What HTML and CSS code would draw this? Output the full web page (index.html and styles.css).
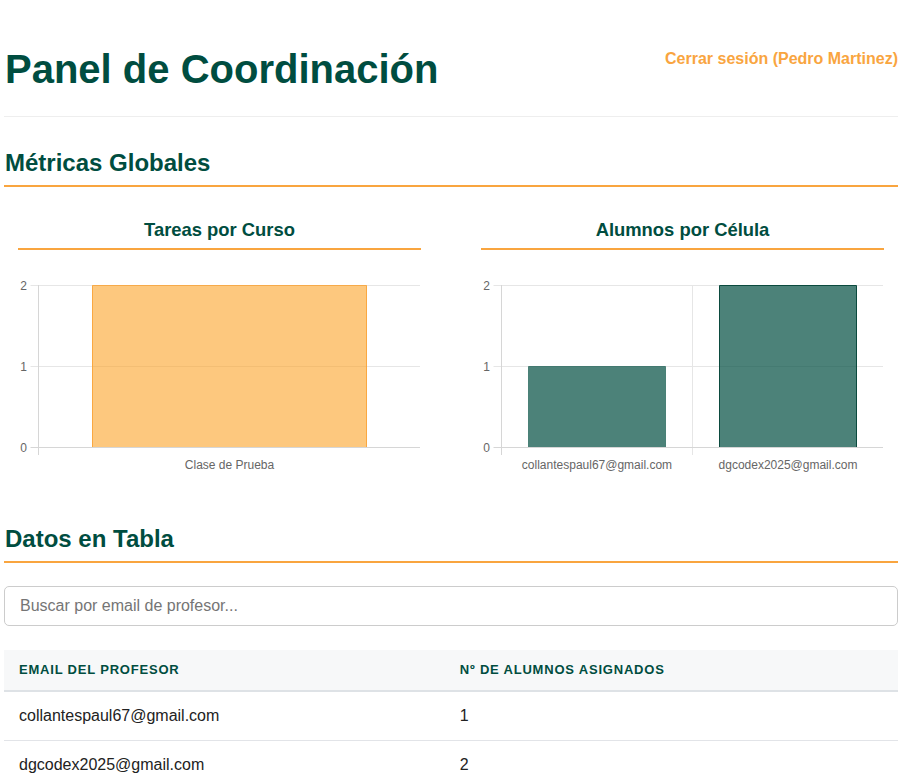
FILE: index.html
```html
<!DOCTYPE html>
<html lang="es">
<head>
<meta charset="utf-8">
<title>Panel de Coordinación</title>
<link rel="stylesheet" href="styles.css">
</head>
<body>
<div class="page">
  <header class="top">
    <h1 class="title">Panel de Coordinación</h1>
    <a class="logout" href="#">Cerrar sesión (Pedro Martinez)</a>
  </header>

  <section class="metrics">
    <h2 class="section-title">Métricas Globales</h2>
    <div class="charts">
      <div class="chart-card">
        <h3 class="chart-title">Tareas por Curso</h3>
        <svg class="chart" width="403" height="205" viewBox="0 0 403 205">
          <g class="grid">
            <line x1="12.5" y1="14.5" x2="402" y2="14.5"/>
            <line x1="12.5" y1="95.5" x2="402" y2="95.5"/>
          </g>
          <rect x="74" y="14.5" width="275" height="162" class="bar-orange"/>
          <path d="M74.5 176.5 V14.5 H348.5 V176.5" class="bar-orange-edge"/>
          <g class="axis">
            <line x1="20.5" y1="14" x2="20.5" y2="184"/>
            <line x1="12.5" y1="176.5" x2="402" y2="176.5"/>
          </g>
          <g class="tick-label">
            <text x="9" y="18.5" text-anchor="end">2</text>
            <text x="9" y="99.5" text-anchor="end">1</text>
            <text x="9" y="180.5" text-anchor="end">0</text>
            <text x="211.5" y="198" text-anchor="middle">Clase de Prueba</text>
          </g>
        </svg>
      </div>
      <div class="chart-card">
        <h3 class="chart-title">Alumnos por Célula</h3>
        <svg class="chart" width="403" height="205" viewBox="0 0 403 205">
          <g class="grid">
            <line x1="12.5" y1="14.5" x2="402" y2="14.5"/>
            <line x1="12.5" y1="95.5" x2="402" y2="95.5"/>
            <line x1="211.5" y1="14" x2="211.5" y2="184"/>
          </g>
          <rect x="47.5" y="95.5" width="137" height="81" class="bar-green"/>
          <path d="M47.5 176.5 V95.5 H184.5 V176.5" class="bar-green-edge soft"/>
          <rect x="238.5" y="14.5" width="137" height="162" class="bar-green"/>
          <path d="M238.5 176.5 V14.5 H375.5 V176.5" class="bar-green-edge"/>
          <g class="axis">
            <line x1="20.5" y1="14" x2="20.5" y2="184"/>
            <line x1="12.5" y1="176.5" x2="402" y2="176.5"/>
          </g>
          <g class="tick-label">
            <text x="9" y="18.5" text-anchor="end">2</text>
            <text x="9" y="99.5" text-anchor="end">1</text>
            <text x="9" y="180.5" text-anchor="end">0</text>
            <text x="116" y="198" text-anchor="middle">collantespaul67@gmail.com</text>
            <text x="307" y="198" text-anchor="middle">dgcodex2025@gmail.com</text>
          </g>
        </svg>
      </div>
    </div>
  </section>

  <section class="table-section">
    <h2 class="section-title">Datos en Tabla</h2>
    <input class="search" type="text" placeholder="Buscar por email de profesor...">
    <table class="data">
      <thead>
        <tr><th class="col-email">Email del Profesor</th><th>Nº de Alumnos Asignados</th></tr>
      </thead>
      <tbody>
        <tr><td>collantespaul67@gmail.com</td><td>1</td></tr>
        <tr><td>dgcodex2025@gmail.com</td><td>2</td></tr>
      </tbody>
    </table>
  </section>
</div>
</body>
</html>
```
FILE: styles.css
```css
* { box-sizing: border-box; }

body {
  margin: 0;
  font-family: "Liberation Sans", Arial, Helvetica, sans-serif;
  color: #222;
  background: #fff;
}

.page {
  padding: 46px 10px 0 4px;
}

.top {
  display: flex;
  justify-content: space-between;
  align-items: flex-start;
  padding-bottom: 24px;
  border-bottom: 1px solid #eeeeee;
}

.title {
  margin: 0 0 0 1px;
  font-size: 40px;
  line-height: 46px;
  font-weight: 700;
  color: #004d40;
}

.logout {
  margin-top: 4px;
  font-size: 16px;
  font-weight: 700;
  color: #f9a53f;
  text-decoration: none;
}

.metrics {
  margin-top: 32px;
}

.section-title {
  margin: 0;
  padding-bottom: 8px;
  padding-left: 1px;
  font-size: 24px;
  line-height: 28px;
  font-weight: 700;
  color: #004d40;
  border-bottom: 2px solid #f9a53f;
}

.charts {
  display: grid;
  grid-template-columns: 1fr 1fr;
  column-gap: 32px;
  margin-top: 18px;
}

.chart-card {
  padding: 14px;
}

.chart-title {
  margin: 0 0 21px;
  padding-bottom: 8px;
  text-align: center;
  font-size: 18.4px;
  line-height: 21px;
  font-weight: 700;
  color: #004d40;
  border-bottom: 2px solid #f9a53f;
}

.chart {
  display: block;
}

.grid line {
  stroke: #e6e6e6;
  stroke-width: 1;
}

.axis line {
  stroke: #d6d6d6;
  stroke-width: 1;
}

.tick-label text {
  font-family: "Liberation Sans", Arial, sans-serif;
  font-size: 12px;
  fill: #666666;
}

.bar-orange {
  fill: rgba(252, 163, 40, 0.6);
}

.bar-orange-edge {
  fill: none;
  stroke: rgba(249, 160, 50, 0.8);
  stroke-width: 1;
}

.bar-green {
  fill: rgba(0, 77, 64, 0.7);
}

.bar-green-edge {
  fill: none;
  stroke: #0b4a3e;
  stroke-width: 1;
}

.bar-green-edge.soft {
  stroke: rgba(0, 77, 64, 0.55);
}

.table-section {
  margin-top: 35px;
}

.search {
  display: block;
  width: 100%;
  height: 40px;
  margin-top: 23px;
  padding: 0 15px;
  border: 1px solid #cccccc;
  border-radius: 5px;
  font-family: "Liberation Sans", Arial, sans-serif;
  font-size: 16px;
  color: #222;
  background: #fff;
}

.search::placeholder {
  color: #757575;
}

.data {
  width: 100%;
  margin-top: 24px;
  border-collapse: collapse;
}

.data th {
  padding: 12px 15px;
  line-height: 16px;
  text-align: left;
  font-size: 13px;
  font-weight: 700;
  letter-spacing: 0.8px;
  text-transform: uppercase;
  color: #004d40;
  background: #f7f8f9;
  border-bottom: 2px solid #dee2e6;
}

.data th.col-email {
  width: 49.3%;
}

.data td {
  padding: 15px;
  font-size: 16px;
  line-height: 18px;
  color: #222;
  border-bottom: 1px solid #e2e4e8;
}
```
